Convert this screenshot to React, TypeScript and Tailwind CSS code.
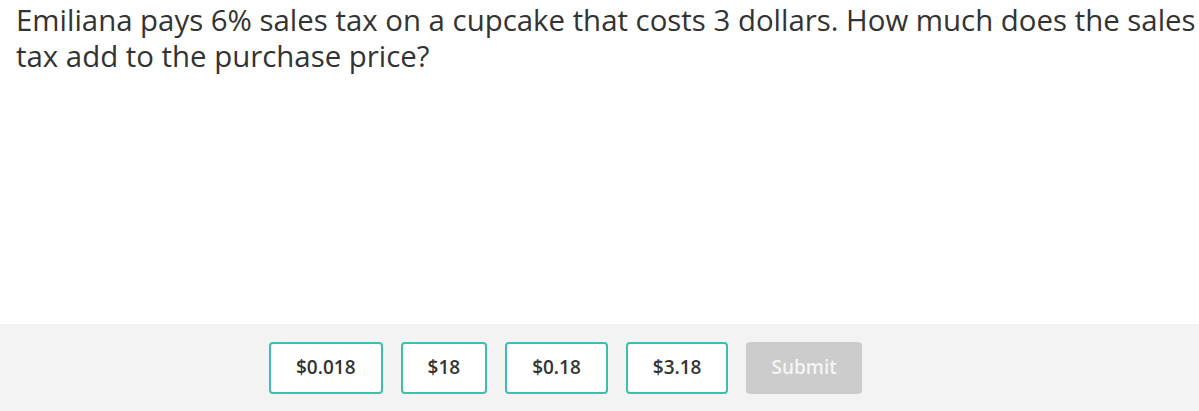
import React from 'react';

const choices = ['$0.018', '$18', '$0.18', '$3.18'];

export default function App() {
  return (
    <div className="h-[411px] w-[1199px] flex flex-col bg-white overflow-hidden" style={{ fontFamily: '"Open Sans", sans-serif' }}>
      <div className="flex-1 pl-4 pt-[2px]">
        <p className="text-[29.4px] leading-[36px] text-[#333333]">
          Emiliana pays 6% sales tax on a cupcake that costs 3 dollars. How much does the sales tax add to the purchase price?
        </p>
      </div>
      <div className="h-[87px] bg-[#f3f3f3] flex items-center pl-[269px] gap-[18px]">
        {choices.map((c) => (
          <button
            key={c}
            className="h-[52px] px-[25px] border-2 border-[#3dbfae] rounded-[4px] bg-white text-[19px] font-semibold text-[#333333]"
          >
            {c}
          </button>
        ))}
        <button className="h-[52px] px-[25px] rounded-[4px] bg-[#cccccc] text-[19px] font-semibold text-[#f5f5f5]">
          Submit
        </button>
      </div>
    </div>
  );
}
